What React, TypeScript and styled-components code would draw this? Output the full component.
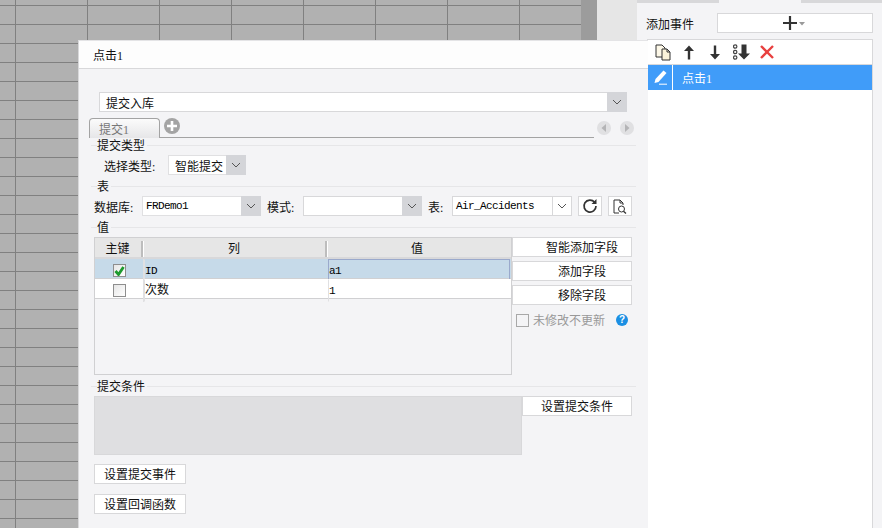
import React from "react";
import styled, { createGlobalStyle } from "styled-components";

const Global = createGlobalStyle`
  html, body { margin: 0; padding: 0; width: 882px; height: 528px; overflow: hidden; }
  body { font-family: "Liberation Serif", "Noto Sans CJK SC", serif; font-size: 12px; color: #111; }
  * { box-sizing: border-box; }
`;

const Page = styled.div`
  position: relative; display: flex; width: 882px; height: 528px; overflow: hidden;
`;
const SheetArea = styled.div`display: flex; width: 637px; height: 528px; flex: none;`;
const SheetGrid = styled.div`
  width: 581px; height: 100%; background-color: #b1b1b1;
  background-image:
    linear-gradient(to right, #808080 1px, transparent 1px),
    linear-gradient(to bottom, #808080 1px, transparent 1px);
  background-size: 72px 19px;
  background-position: 15px 5px;
`;
const ScrollStrip = styled.div`width: 16px; height: 100%; background: #9c9c9c;`;
const Gutter = styled.div`width: 40px; height: 100%; background: #e6e6e6;`;

const SidePanel = styled.aside`
  flex: 1; height: 528px; background: #f4f4f6; display: flex; flex-direction: column;
`;
const TabStrip = styled.div`display: flex; height: 3px; flex: none; background: #d8d8da;`;
const ActiveStripSegment = styled.div`width: 82px; margin-left: 82px; background: #f4f4f6;`;
const AddRow = styled.div`
  display: flex; align-items: center; height: 20px; margin-top: 10px; padding-left: 9px;
`;
const AddLabel = styled.span`width: 71px; font-size: 12px; line-height: 20px; padding-top: 4px;`;
const AddButton = styled.div`
  width: 156px; height: 20px; background: #fff; border: 1px solid #d8d8da;
  display: flex; align-items: center; justify-content: center;
`;
const EventList = styled.div`
  margin: 6px 9px 0 10px; flex: 1; background: #fff; border: 1px solid #d8d8da;
  border-bottom: none; display: flex; flex-direction: column;
`;
const ListTools = styled.div`
  height: 25px; display: flex; align-items: center; padding-left: 3px;
  border-bottom: 1px solid #d8d8da; flex: none;
`;
const ToolSlot = styled.span<{ $w: number }>`
  width: ${p => p.$w}px; height: 24px; display: flex; align-items: center; justify-content: center; flex: none;
`;
const EventRow = styled.div`
  height: 25px; background: #409cf9; display: flex; align-items: center; color: #fff; flex: none;
`;
const EventIconCell = styled.span`
  width: 25px; height: 25px; display: flex; align-items: center; justify-content: center;
  border-right: 1px solid #fff; flex: none;
`;
const EventName = styled.span`margin-left: 9px;`;

const Modal = styled.section`
  position: absolute; left: 78px; top: 40px; width: 570px; height: 488px;
  background: #f4f4f6; border-left: 1px solid #d8d8da; border-top: 1px solid #e4e4e6;
  display: flex; flex-direction: column;
`;
const ModalHead = styled.header`
  height: 28px; flex: none; background: #fdfdfd; border-bottom: 1px solid #d8d8da;
  padding-left: 14px; display: flex; align-items: center; font-size: 12px;
`;
const ModalBody = styled.div`
  flex: 1; display: flex; flex-direction: column;
`;
const SelectBox = styled.div<{ $w: number; $light?: boolean }>`
  width: ${p => p.$w}px; height: 20px; flex: none; display: flex; background: #fff;
  border: 1px solid ${p => (p.$light ? "#d8d8da" : "#e0e0e2")};
`;
const SelectText = styled.span`
  flex: 1; padding-left: 6px; line-height: 22px; white-space: nowrap;
`;
const MonoText = styled.span`
  flex: 1; padding-left: 3px; line-height: 19px; white-space: nowrap; overflow: hidden;
  font-family: "Liberation Mono", monospace; font-size: 11px; letter-spacing: -0.6px; color: #000;
`;
const Arrow = styled.span`
  width: 20px; margin: -1px -1px -1px 0; flex: none; display: flex; align-items: center; justify-content: center;
  background: #d4d5d9;
`;
const LightArrow = styled.span`
  width: 19px; flex: none; display: flex; align-items: center; justify-content: center;
  background: #fff; border-left: 1px solid #d8d8da;
`;
const TopSelectRow = styled.div`padding-left: 20px; margin-top: 23px;`;
const TabsRow = styled.div`
  display: flex; align-items: flex-start; margin-top: 6px; margin-left: 10px; height: 20px; width: 545px;
`;
const Tab = styled.div`
  width: 71px; height: 20px; border: 1px solid #a3a3a3; border-bottom: none; border-radius: 4px 4px 0 0;
  background: linear-gradient(#fbfbfb, #e6e6e8); color: #777; padding-left: 9px; line-height: 22px; flex: none;
`;
const TabRule = styled.div`
  flex: 1; height: 20px; border-bottom: 1px solid #a3a3a3; padding-left: 4px;
`;
const TabNav = styled.div`display: flex; gap: 9px; margin-left: 3px; padding-top: 3px;`;
const Legend = styled.div<{ $top: number }>`
  display: flex; align-items: center; margin: ${p => p.$top}px 0 0 12px; width: 545px; height: 14px; line-height: 14px;
  &::before { content: ""; width: 6px; height: 1px; background: #e6e6e8; flex: none; }
  &::after { content: ""; flex: 1; height: 1px; background: #e6e6e8; margin-left: 2px; }
`;
const LegendText = styled.span`padding-top: 2px;`;
const FormRow = styled.div<{ $left: number; $top: number }>`
  display: flex; align-items: center; height: 20px; padding-left: ${p => p.$left}px; margin-top: ${p => p.$top}px;
`;
const FieldLabel = styled.span<{ $w: number; $ml?: number }>`
  width: ${p => p.$w}px; flex: none; white-space: nowrap; padding-top: 2px; margin-left: ${p => p.$ml ?? 0}px;
`;
const IconButton = styled.span<{ $ml: number }>`
  width: 24px; height: 20px; margin-left: ${p => p.$ml}px; flex: none; background: #fff; border: 1px solid #d8d8da;
  display: flex; align-items: center; justify-content: center;
`;
const ValuesArea = styled.div`display: flex; margin: 3px 0 0 15px;`;
const TableBox = styled.div`
  width: 418px; height: 138px; border: 1px solid #d0d0d2; flex: none; display: flex; flex-direction: column;
`;
const HeadRow = styled.div`
  height: 21px; background: #e6e6e6; display: grid; grid-template-columns: 49px 184px 182px; flex: none;
  border-bottom: 2px solid #d8d8da;
`;
const HeadCell = styled.div`
  text-align: center; line-height: 22px; position: relative; padding-right: 4px;
  &:not(:last-child)::after {
    content: ""; position: absolute; right: 0; top: 3px; bottom: 3px; width: 2px; background: #bdbdbd;
    border-right: 1px solid #fff;
  }
`;
const DataRow = styled.div<{ $on?: boolean }>`
  height: 20px; display: grid; grid-template-columns: 49px 184px 182px; flex: none;
  background: ${p => (p.$on ? "#c6dae9" : "#fff")}; border-bottom: 1px solid #d0d0d2;
`;
const CheckCell = styled.div`display: flex; align-items: center; justify-content: center; border-right: 1px solid #e0e0e2;`;
const TextCell = styled.div<{ $sel?: boolean }>`
  line-height: 20px; padding-left: ${p => (p.$sel ? 0 : 0)}px; border: 1px solid ${p => (p.$sel ? "#9aa9cc" : "transparent")};
  border-left-color: ${p => (p.$sel ? "#9aa9cc" : "#e0e0e2")};
`;
const LatinCell = styled.span`font-family: "Liberation Mono", monospace; font-size: 11px; letter-spacing: -0.6px; color: #000;`;
const Check = styled.span`
  width: 13px; height: 13px; border: 1px solid #8e8e8e; background: linear-gradient(135deg, #e6e6e6, #fff);
  display: flex; align-items: center; justify-content: center;
`;
const ActionColumn = styled.div`display: flex; flex-direction: column; gap: 4px; flex: none;`;
const ActionButton = styled.div<{ $pad?: number }>`
  width: 120px; height: 20px; background: #fff; border: 1px solid #d8d8da; text-align: center;
  line-height: 20px; padding-left: ${p => p.$pad ?? 0}px; color: #111;
`;
const UpdateRow = styled.div`
  display: flex; align-items: center; height: 14px; margin-top: 4px; padding-left: 4px; color: #999;
`;
const SmallCheck = styled.span`width: 13px; height: 13px; border: 1px solid #a8a8a8; margin-right: 4px; flex: none;`;
const HelpDot = styled.span`
  margin-left: 11px; width: 12px; height: 12px; border-radius: 50%; background: #1b8fe3; color: #fff;
  font: 700 10px/12px "Liberation Sans", sans-serif; text-align: center; flex: none;
`;
const ConditionArea = styled.div`display: flex; margin: 3px 0 0 15px; align-items: flex-start;`;
const ConditionBox = styled.div`width: 428px; height: 59px; background: #dfdfe1; border: 1px solid #d8d8da; flex: none;`;
const ConditionButton = styled.div`
  width: 110px; height: 20px; background: #fff; border: 1px solid #d8d8da; text-align: center; line-height: 20px;
`;
const EventButton = styled.div<{ $top: number }>`
  width: 92px; height: 20px; margin: ${p => p.$top}px 0 0 15px; background: #fff; border: 1px solid #d8d8da;
  text-align: center; line-height: 20px;
`;

const Chevron = () => (
  <svg width="10" height="6" viewBox="0 0 10 6"><path d="M1 1l4 4 4-4" fill="none" stroke="#555" strokeWidth="1" /></svg>
);
const NavCircle = ({ dir }: { dir: "l" | "r" }) => (
  <svg width="14" height="14" viewBox="0 0 14 14">
    <circle cx="7" cy="7" r="7" fill="#e0e0e2" />
    <path d={dir === "l" ? "M9 3v8L4.5 7z" : "M5 3v8l4.5-4z"} fill="#b4b4b6" />
  </svg>
);

export default function App() {
  return (
    <Page>
      <Global />
      <SheetArea>
        <SheetGrid />
        <ScrollStrip />
        <Gutter />
      </SheetArea>
      <SidePanel>
        <TabStrip><ActiveStripSegment /></TabStrip>
        <AddRow>
          <AddLabel>添加事件</AddLabel>
          <AddButton>
            <svg width="24" height="14" viewBox="0 0 24 14">
              <path d="M7 0v14M0 7h14" stroke="#333" strokeWidth="2.2" fill="none" />
              <path d="M16 6h6l-3 3.5z" fill="#999" />
            </svg>
          </AddButton>
        </AddRow>
        <EventList>
          <ListTools>
            <ToolSlot $w={25}>
              <svg width="17" height="17" viewBox="0 0 17 17">
                <path d="M1 1h6l3 3v9H1z" fill="#fdf8e8" stroke="#333" />
                <path d="M7 5h5l3 3v8H7z" fill="#fbf3d9" stroke="#333" />
                <path d="M12 5v3h3" fill="none" stroke="#333" />
              </svg>
            </ToolSlot>
            <ToolSlot $w={26}>
              <svg width="10" height="15" viewBox="0 0 10 15"><path d="M5 0.5L10 6H6.2v8.5H3.8V6H0z" fill="#333" /></svg>
            </ToolSlot>
            <ToolSlot $w={26}>
              <svg width="10" height="15" viewBox="0 0 10 15"><path d="M5 14.5L10 9H6.2V0.5H3.8V9H0z" fill="#333" /></svg>
            </ToolSlot>
            <ToolSlot $w={26}>
              <svg width="17" height="16" viewBox="0 0 17 16">
                <circle cx="2.2" cy="2.5" r="1.7" fill="none" stroke="#444" strokeWidth="1.2" />
                <circle cx="2.2" cy="8" r="1.7" fill="none" stroke="#444" strokeWidth="1.2" />
                <circle cx="2.2" cy="13.5" r="1.7" fill="none" stroke="#444" strokeWidth="1.2" />
                <path d="M11 15.5L17 9.5H13.5V0.5H8.5V9.5H5z" fill="#333" />
              </svg>
            </ToolSlot>
            <ToolSlot $w={26}>
              <svg width="14" height="14" viewBox="0 0 14 14"><path d="M1 1l12 12M13 1L1 13" stroke="#e8403f" strokeWidth="2.4" /></svg>
            </ToolSlot>
          </ListTools>
          <EventRow>
            <EventIconCell>
              <svg width="15" height="15" viewBox="0 0 15 15">
                <path d="M10.5 0.5l3 2.5-8 9L1.5 13l1-4z" fill="#fff" />
                <path d="M6 14.2h8" stroke="#fff" strokeWidth="1" />
              </svg>
            </EventIconCell>
            <EventName>点击1</EventName>
          </EventRow>
        </EventList>
      </SidePanel>

      <Modal>
        <ModalHead>点击1</ModalHead>
        <ModalBody>
          <TopSelectRow>
            <SelectBox $w={528} $light><SelectText>提交入库</SelectText><Arrow><Chevron /></Arrow></SelectBox>
          </TopSelectRow>
          <TabsRow>
            <Tab>提交1</Tab>
            <TabRule>
              <svg width="16" height="16" viewBox="0 0 16 16">
                <circle cx="8" cy="8" r="8" fill="#a4a4a4" />
                <path d="M8 3v10M3 8h10" stroke="#fff" strokeWidth="2.6" />
              </svg>
            </TabRule>
            <TabNav><NavCircle dir="l" /><NavCircle dir="r" /></TabNav>
          </TabsRow>
          <Legend $top={0}><LegendText>提交类型</LegendText></Legend>
          <FormRow $left={25} $top={3}>
            <FieldLabel $w={64}>选择类型:</FieldLabel>
            <SelectBox $w={78}><SelectText>智能提交</SelectText><Arrow><Chevron /></Arrow></SelectBox>
          </FormRow>
          <Legend $top={4}><LegendText>表</LegendText></Legend>
          <FormRow $left={15} $top={3}>
            <FieldLabel $w={48}>数据库:</FieldLabel>
            <SelectBox $w={119}><MonoText>FRDemo1</MonoText><Arrow><Chevron /></Arrow></SelectBox>
            <FieldLabel $w={36} $ml={6}>模式:</FieldLabel>
            <SelectBox $w={119} $light><MonoText /><Arrow><Chevron /></Arrow></SelectBox>
            <FieldLabel $w={24} $ml={6}>表:</FieldLabel>
            <SelectBox $w={120} $light><MonoText>Air_Accidents</MonoText><LightArrow><Chevron /></LightArrow></SelectBox>
            <IconButton $ml={6}>
              <svg width="16" height="16" viewBox="0 0 16 16">
                <path d="M12.6 4.2A6 6 0 1 0 14 8" fill="none" stroke="#333" strokeWidth="1.7" />
                <path d="M14.5 1v5h-5z" fill="#333" />
              </svg>
            </IconButton>
            <IconButton $ml={6}>
              <svg width="14" height="15" viewBox="0 0 14 15">
                <path d="M6 14H1V1h6l3 3v2M7 1v3h3" fill="none" stroke="#333" />
                <circle cx="8.5" cy="10" r="3" fill="none" stroke="#333" />
                <path d="M10.5 12.2l2.5 2.3" stroke="#333" strokeWidth="1.3" />
              </svg>
            </IconButton>
          </FormRow>
          <Legend $top={4}><LegendText>值</LegendText></Legend>
          <ValuesArea>
            <TableBox>
              <HeadRow>
                <HeadCell>主键</HeadCell>
                <HeadCell>列</HeadCell>
                <HeadCell>值</HeadCell>
              </HeadRow>
              <DataRow $on>
                <CheckCell>
                  <Check>
                    <svg width="11" height="10" viewBox="0 0 11 10"><path d="M1.5 5l3 3.5L9.5 1" fill="none" stroke="#1c9a2e" strokeWidth="2.8" /></svg>
                  </Check>
                </CheckCell>
                <TextCell><LatinCell>ID</LatinCell></TextCell>
                <TextCell $sel><LatinCell>a1</LatinCell></TextCell>
              </DataRow>
              <DataRow>
                <CheckCell><Check /></CheckCell>
                <TextCell>次数</TextCell>
                <TextCell><LatinCell>1</LatinCell></TextCell>
              </DataRow>
            </TableBox>
            <ActionColumn>
              <ActionButton $pad={20}>智能添加字段</ActionButton>
              <ActionButton $pad={20}>添加字段</ActionButton>
              <ActionButton $pad={20}>移除字段</ActionButton>
              <UpdateRow>
                <SmallCheck />
                未修改不更新
                <HelpDot>?</HelpDot>
              </UpdateRow>
            </ActionColumn>
          </ValuesArea>
          <Legend $top={4}><LegendText>提交条件</LegendText></Legend>
          <ConditionArea>
            <ConditionBox />
            <ConditionButton>设置提交条件</ConditionButton>
          </ConditionArea>
          <EventButton $top={9}>设置提交事件</EventButton>
          <EventButton $top={10}>设置回调函数</EventButton>
        </ModalBody>
      </Modal>
    </Page>
  );
}
